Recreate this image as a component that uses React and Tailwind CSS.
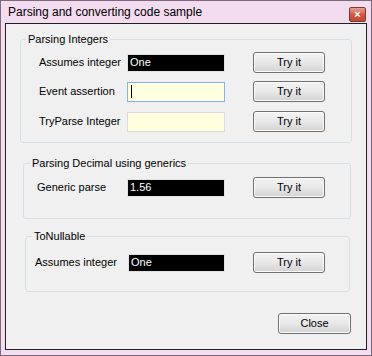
import React from "react";

const font = { fontFamily: '"Liberation Sans", Arial, sans-serif' };

function TryButton({ label = "Try it", className = "" }) {
    return (
        <button
            className={`h-[21px] w-[72px] shrink-0 rounded-[3px] border border-[#707070] bg-linear-to-b from-[#f3f3f3] via-[#e8e8e8] to-[#d2d2d2] text-[11px] text-black shadow-[inset_0_0_0_1px_#fbfbfb] ${className}`}
        >
            {label}
        </button>
    );
}

function DarkInput({ value, className = "" }) {
    return (
        <div className={`flex h-[18px] shrink-0 items-center border border-[#e2e2e2] bg-black pl-[2px] text-[11px] text-white ${className}`}>
            {value}
        </div>
    );
}

function YellowInput({ focused, className = "" }) {
    return (
        <div
            className={`flex h-[20px] shrink-0 items-center border bg-[#ffffe0] pl-[3px] ${focused ? "border-[#7eb4ea]" : "border-[#dadada]"} ${className}`}
        >
            {focused && <span className="h-[13px] w-px bg-black" />}
        </div>
    );
}

function Row({ label, labelClass, children }) {
    return (
        <div className="flex h-[21px] items-center">
            <span className={`shrink-0 text-[11px] text-black ${labelClass}`}>{label}</span>
            {children}
        </div>
    );
}

export default function App() {
    return (
        <div style={font} className="flex h-[356px] w-[372px] flex-col border border-[#7a6a7a] bg-[#f3dcef]">
            {/* title bar */}
            <div className="relative flex h-[22px] shrink-0 items-center pl-[7px] text-[12px] text-black">
                Parsing and converting code sample
                <div className="absolute right-[5px] top-[6px] flex h-[15px] w-[17px] items-center justify-center rounded-[2px] border border-[#7a3a30] bg-linear-to-b from-[#e6a08e] via-[#cf5a45] to-[#c24632] text-[11px] font-bold leading-none text-white">
                    ×
                </div>
            </div>

            {/* client area */}
            <div className="mx-[4px] mb-[5px] flex flex-1 flex-col border border-[#202020] bg-[#f0f0f0]">
                <fieldset className="ml-[14px] mt-[9px] w-[332px] rounded-[3px] border border-[#d5dfe5] pb-[10px]">
                    <legend className="ml-[5px] px-[2px] text-[11px] leading-[12px] text-black">Parsing Integers</legend>
                    <div className="mt-[7px] flex flex-col gap-[8px] pl-[18px]">
                        <Row label="Assumes integer" labelClass="w-[88px]">
                            <DarkInput value="One" className="w-[98px]" />
                            <TryButton className="ml-[28px]" />
                        </Row>
                        <Row label="Event assertion" labelClass="w-[88px]">
                            <YellowInput focused className="w-[98px]" />
                            <TryButton className="ml-[28px]" />
                        </Row>
                        <div className="mt-px">
                            <Row label="TryParse Integer" labelClass="w-[88px]">
                                <YellowInput className="w-[98px]" />
                                <TryButton className="ml-[28px]" />
                            </Row>
                        </div>
                    </div>
                </fieldset>

                <fieldset className="ml-[17px] mt-[14px] w-[328px] rounded-[3px] border border-[#d5dfe5] pb-[20px]">
                    <legend className="ml-[6px] px-[2px] text-[11px] leading-[12px] text-black">Parsing Decimal using generics</legend>
                    <div className="mt-[8px] pl-[13px]">
                        <Row label="Generic parse" labelClass="w-[90px]">
                            <DarkInput value="1.56" className="w-[98px]" />
                            <TryButton className="ml-[28px]" />
                        </Row>
                    </div>
                </fieldset>

                <fieldset className="ml-[19px] mt-[11px] w-[325px] rounded-[3px] border border-[#d5dfe5] pb-[18px]">
                    <legend className="ml-[6px] px-[2px] text-[11px] leading-[12px] text-black">ToNullable</legend>
                    <div className="mt-[10px] pl-[9px]">
                        <Row label="Assumes integer" labelClass="w-[93px]">
                            <DarkInput value="One" className="w-[97px]" />
                            <TryButton className="ml-[28px]" />
                        </Row>
                    </div>
                </fieldset>

                <div className="mt-[21px] flex justify-end pr-[15px]">
                    <TryButton label="Close" className="w-[73px]" />
                </div>
            </div>
        </div>
    );
}
